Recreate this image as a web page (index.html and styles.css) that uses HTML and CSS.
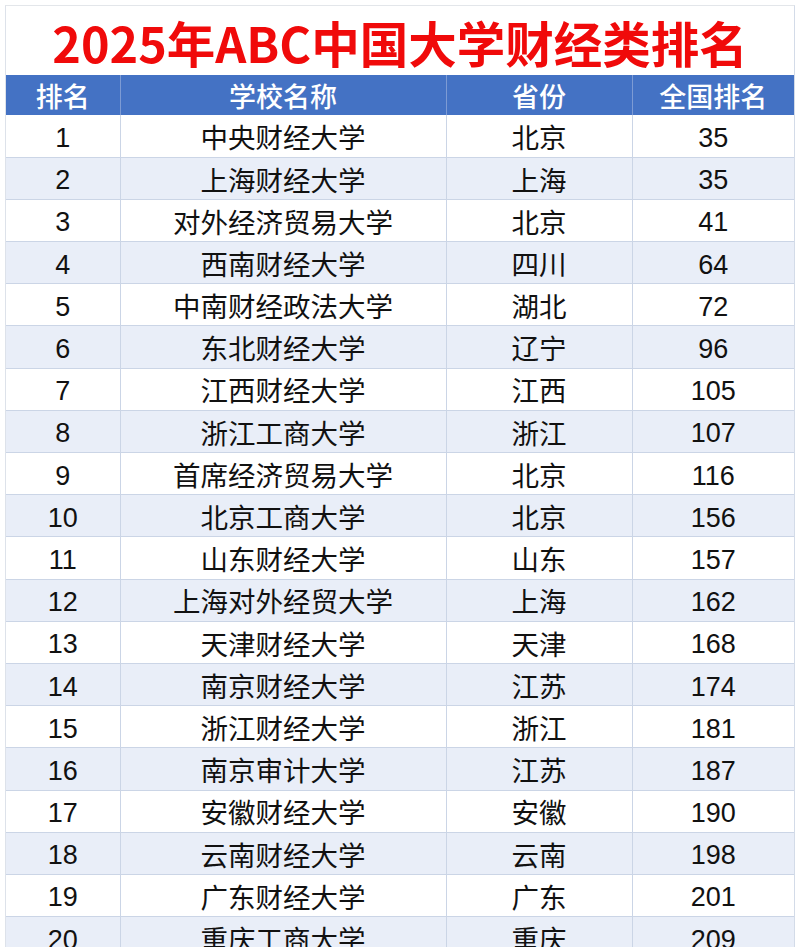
FILE: index.html
```html
<!DOCTYPE html>
<html lang="zh-CN">
<head>
<meta charset="utf-8">
<title>2025年ABC中国大学财经类排名</title>
<link rel="stylesheet" href="styles.css">
</head>
<body>
<div class="sheet">
  <div class="title">2025年ABC中国大学财经类排名</div>
  <table class="rank">
    <colgroup>
      <col class="c1"><col class="c2"><col class="c3"><col class="c4">
    </colgroup>
    <thead>
      <tr><th>排名</th><th>学校名称</th><th>省份</th><th>全国排名</th></tr>
    </thead>
    <tbody>
      <tr><td class="num">1</td><td>中央财经大学</td><td>北京</td><td class="num">35</td></tr>
      <tr><td class="num">2</td><td>上海财经大学</td><td>上海</td><td class="num">35</td></tr>
      <tr><td class="num">3</td><td>对外经济贸易大学</td><td>北京</td><td class="num">41</td></tr>
      <tr><td class="num">4</td><td>西南财经大学</td><td>四川</td><td class="num">64</td></tr>
      <tr><td class="num">5</td><td>中南财经政法大学</td><td>湖北</td><td class="num">72</td></tr>
      <tr><td class="num">6</td><td>东北财经大学</td><td>辽宁</td><td class="num">96</td></tr>
      <tr><td class="num">7</td><td>江西财经大学</td><td>江西</td><td class="num">105</td></tr>
      <tr><td class="num">8</td><td>浙江工商大学</td><td>浙江</td><td class="num">107</td></tr>
      <tr><td class="num">9</td><td>首席经济贸易大学</td><td>北京</td><td class="num">116</td></tr>
      <tr><td class="num">10</td><td>北京工商大学</td><td>北京</td><td class="num">156</td></tr>
      <tr><td class="num">11</td><td>山东财经大学</td><td>山东</td><td class="num">157</td></tr>
      <tr><td class="num">12</td><td>上海对外经贸大学</td><td>上海</td><td class="num">162</td></tr>
      <tr><td class="num">13</td><td>天津财经大学</td><td>天津</td><td class="num">168</td></tr>
      <tr><td class="num">14</td><td>南京财经大学</td><td>江苏</td><td class="num">174</td></tr>
      <tr><td class="num">15</td><td>浙江财经大学</td><td>浙江</td><td class="num">181</td></tr>
      <tr><td class="num">16</td><td>南京审计大学</td><td>江苏</td><td class="num">187</td></tr>
      <tr><td class="num">17</td><td>安徽财经大学</td><td>安徽</td><td class="num">190</td></tr>
      <tr><td class="num">18</td><td>云南财经大学</td><td>云南</td><td class="num">198</td></tr>
      <tr><td class="num">19</td><td>广东财经大学</td><td>广东</td><td class="num">201</td></tr>
      <tr><td class="num">20</td><td>重庆工商大学</td><td>重庆</td><td class="num">209</td></tr>
    </tbody>
  </table>
</div>
</body>
</html>
```
FILE: styles.css
```css
html, body {
  margin: 0;
  padding: 0;
  background: #ffffff;
}
body {
  padding: 5px 5px 0 5px;
  font-family: "Noto Sans CJK SC", "Noto Sans", sans-serif;
}
.sheet {
  width: 790px;
  height: 942px;
  overflow: hidden;
  box-sizing: border-box;
  border-top: 1px solid #e3e6ea;
  border-left: 1px solid #dde2ea;
  border-right: 1px solid #d3dbe8;
}
.title {
  height: 69px;
  display: flex;
  align-items: center;
  justify-content: center;
  color: #f00a0a;
  font-size: 48.5px;
  font-weight: 700;
  line-height: 1;
  padding-top: 3px;
  box-sizing: border-box;
}
.rank {
  width: 788px;
  border-collapse: collapse;
  table-layout: fixed;
}
.c1 { width: 114px; }
.c2 { width: 326px; }
.c3 { width: 186px; }
.c4 { width: 162px; }
.rank th {
  height: 40px;
  padding: 0;
  background: #4472c4;
  color: #ffffff;
  font-size: 27px;
  font-weight: 500;
  text-align: center;
  border-left: 1px solid #7d9bd4;
  line-height: 1;
}
.rank th:first-child { border-left: none; }
.rank td {
  height: 42.2px;
  padding: 2px 0 0 0;
  text-align: center;
  color: #111111;
  font-size: 27.5px;
  line-height: 1;
  border-left: 1px solid #cbd5e6;
  border-bottom: 1px solid #cbd5e6;
  box-sizing: border-box;
}
.rank td:first-child { border-left: none; }
.rank tbody tr:nth-child(even) td { background: #e9eef8; }
.rank td.num {
  font-family: "Liberation Sans", Arial, sans-serif;
  font-size: 27px;
  padding-top: 5px;
}
```
